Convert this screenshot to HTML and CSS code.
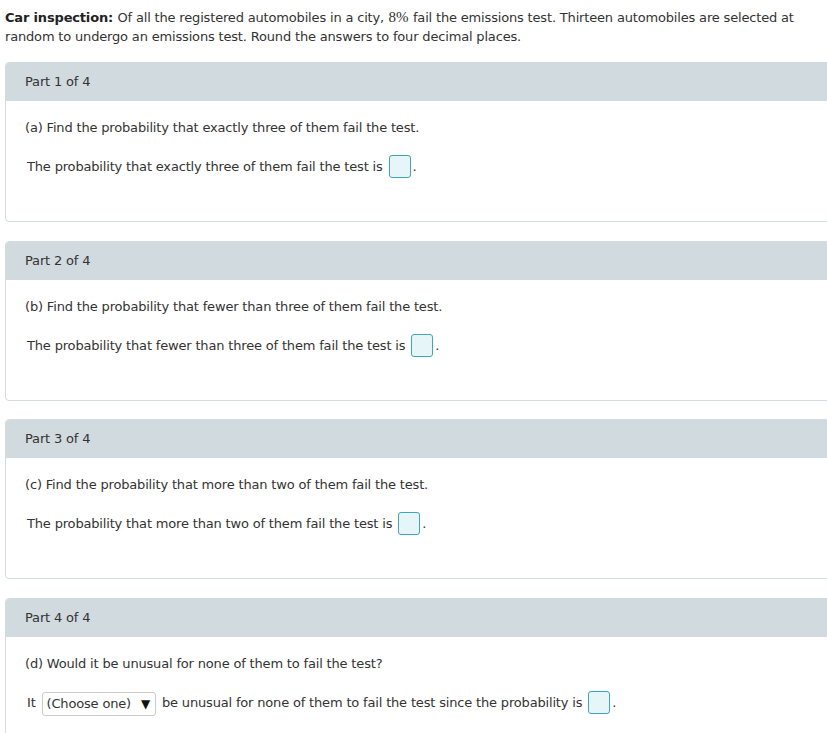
FILE: index.html
```html
<!DOCTYPE html>
<html>
<head>
<meta charset="utf-8">
<link rel="stylesheet" href="styles.css">
</head>
<body>
<p class="intro"><b class="lead">Car inspection:</b> Of all the registered automobiles in a city, <span class="math">8%</span> fail the emissions test. Thirteen automobiles are selected at random to undergo an emissions test. Round the answers to four decimal places.</p>

<div class="panel">
  <div class="panel-head">Part 1 of 4</div>
  <div class="panel-body">
    <p class="q">(a) Find the probability that exactly three of them fail the test.</p>
    <p class="a">The probability that exactly three of them fail the test is <span class="box"></span>.</p>
  </div>
</div>

<div class="panel panel-tight">
  <div class="panel-head">Part 2 of 4</div>
  <div class="panel-body">
    <p class="q">(b) Find the probability that fewer than three of them fail the test.</p>
    <p class="a">The probability that fewer than three of them fail the test is <span class="box"></span>.</p>
  </div>
</div>

<div class="panel">
  <div class="panel-head">Part 3 of 4</div>
  <div class="panel-body">
    <p class="q">(c) Find the probability that more than two of them fail the test.</p>
    <p class="a">The probability that more than two of them fail the test is <span class="box"></span>.</p>
  </div>
</div>

<div class="panel">
  <div class="panel-head">Part 4 of 4</div>
  <div class="panel-body">
    <p class="q">(d) Would it be unusual for none of them to fail the test?</p>
    <p class="a">It <span class="select">(Choose one) <span class="arrow">&#9660;</span></span> be unusual for none of them to fail the test since the probability is <span class="box"></span>.</p>
  </div>
</div>
</body>
</html>
```
FILE: styles.css
```css
html, body {
  margin: 0;
  padding: 0;
  background: #fff;
}
body {
  font-family: "DejaVu Sans", Verdana, sans-serif;
  font-size: 13px;
  letter-spacing: -0.17px;
  color: #333;
  padding: 8px 0 0 5px;
  overflow: hidden;
}
.intro {
  margin: 0 0 16px 0;
  line-height: 19px;
}
.lead {
  color: #222;
  margin-right: 0.5px;
}
.math {
  font-family: "Liberation Serif", "DejaVu Serif", serif;
  font-size: 15px;
  line-height: 15px;
  letter-spacing: 0;
  margin: 0 0.5px;
}
.panel {
  width: 840px;
  border: 1px solid #d3dbde;
  border-radius: 4px;
  margin-bottom: 19px;
  height: 158px;
}
.panel-tight {
  margin-bottom: 18px;
}
.panel-head {
  background: #d1dade;
  height: 38px;
  line-height: 38px;
  padding-left: 19px;
  border-radius: 3px 3px 0 0;
}
.panel-body {
  padding: 16px 19px 0 19px;
}
.q {
  margin: 0;
  line-height: 22px;
}
.a {
  margin: 16px 0 0 2px;
  line-height: 24px;
}
.box {
  display: inline-block;
  width: 20px;
  height: 21px;
  border: 1px solid #3fa7b4;
  border-radius: 3px;
  background: #e6f5f8;
  vertical-align: middle;
  margin-left: 2px;
  margin-right: 2px;
  position: relative;
  top: -1px;
}
.select {
  display: inline-block;
  border: 1px solid #ccc;
  border-radius: 3px;
  padding: 0 5px 0 4px;
  height: 22px;
  line-height: 22px;
  vertical-align: middle;
  margin: 0 2px;
}
.arrow {
  font-size: 12px;
  margin-left: 6px;
  color: #111;
}
```
